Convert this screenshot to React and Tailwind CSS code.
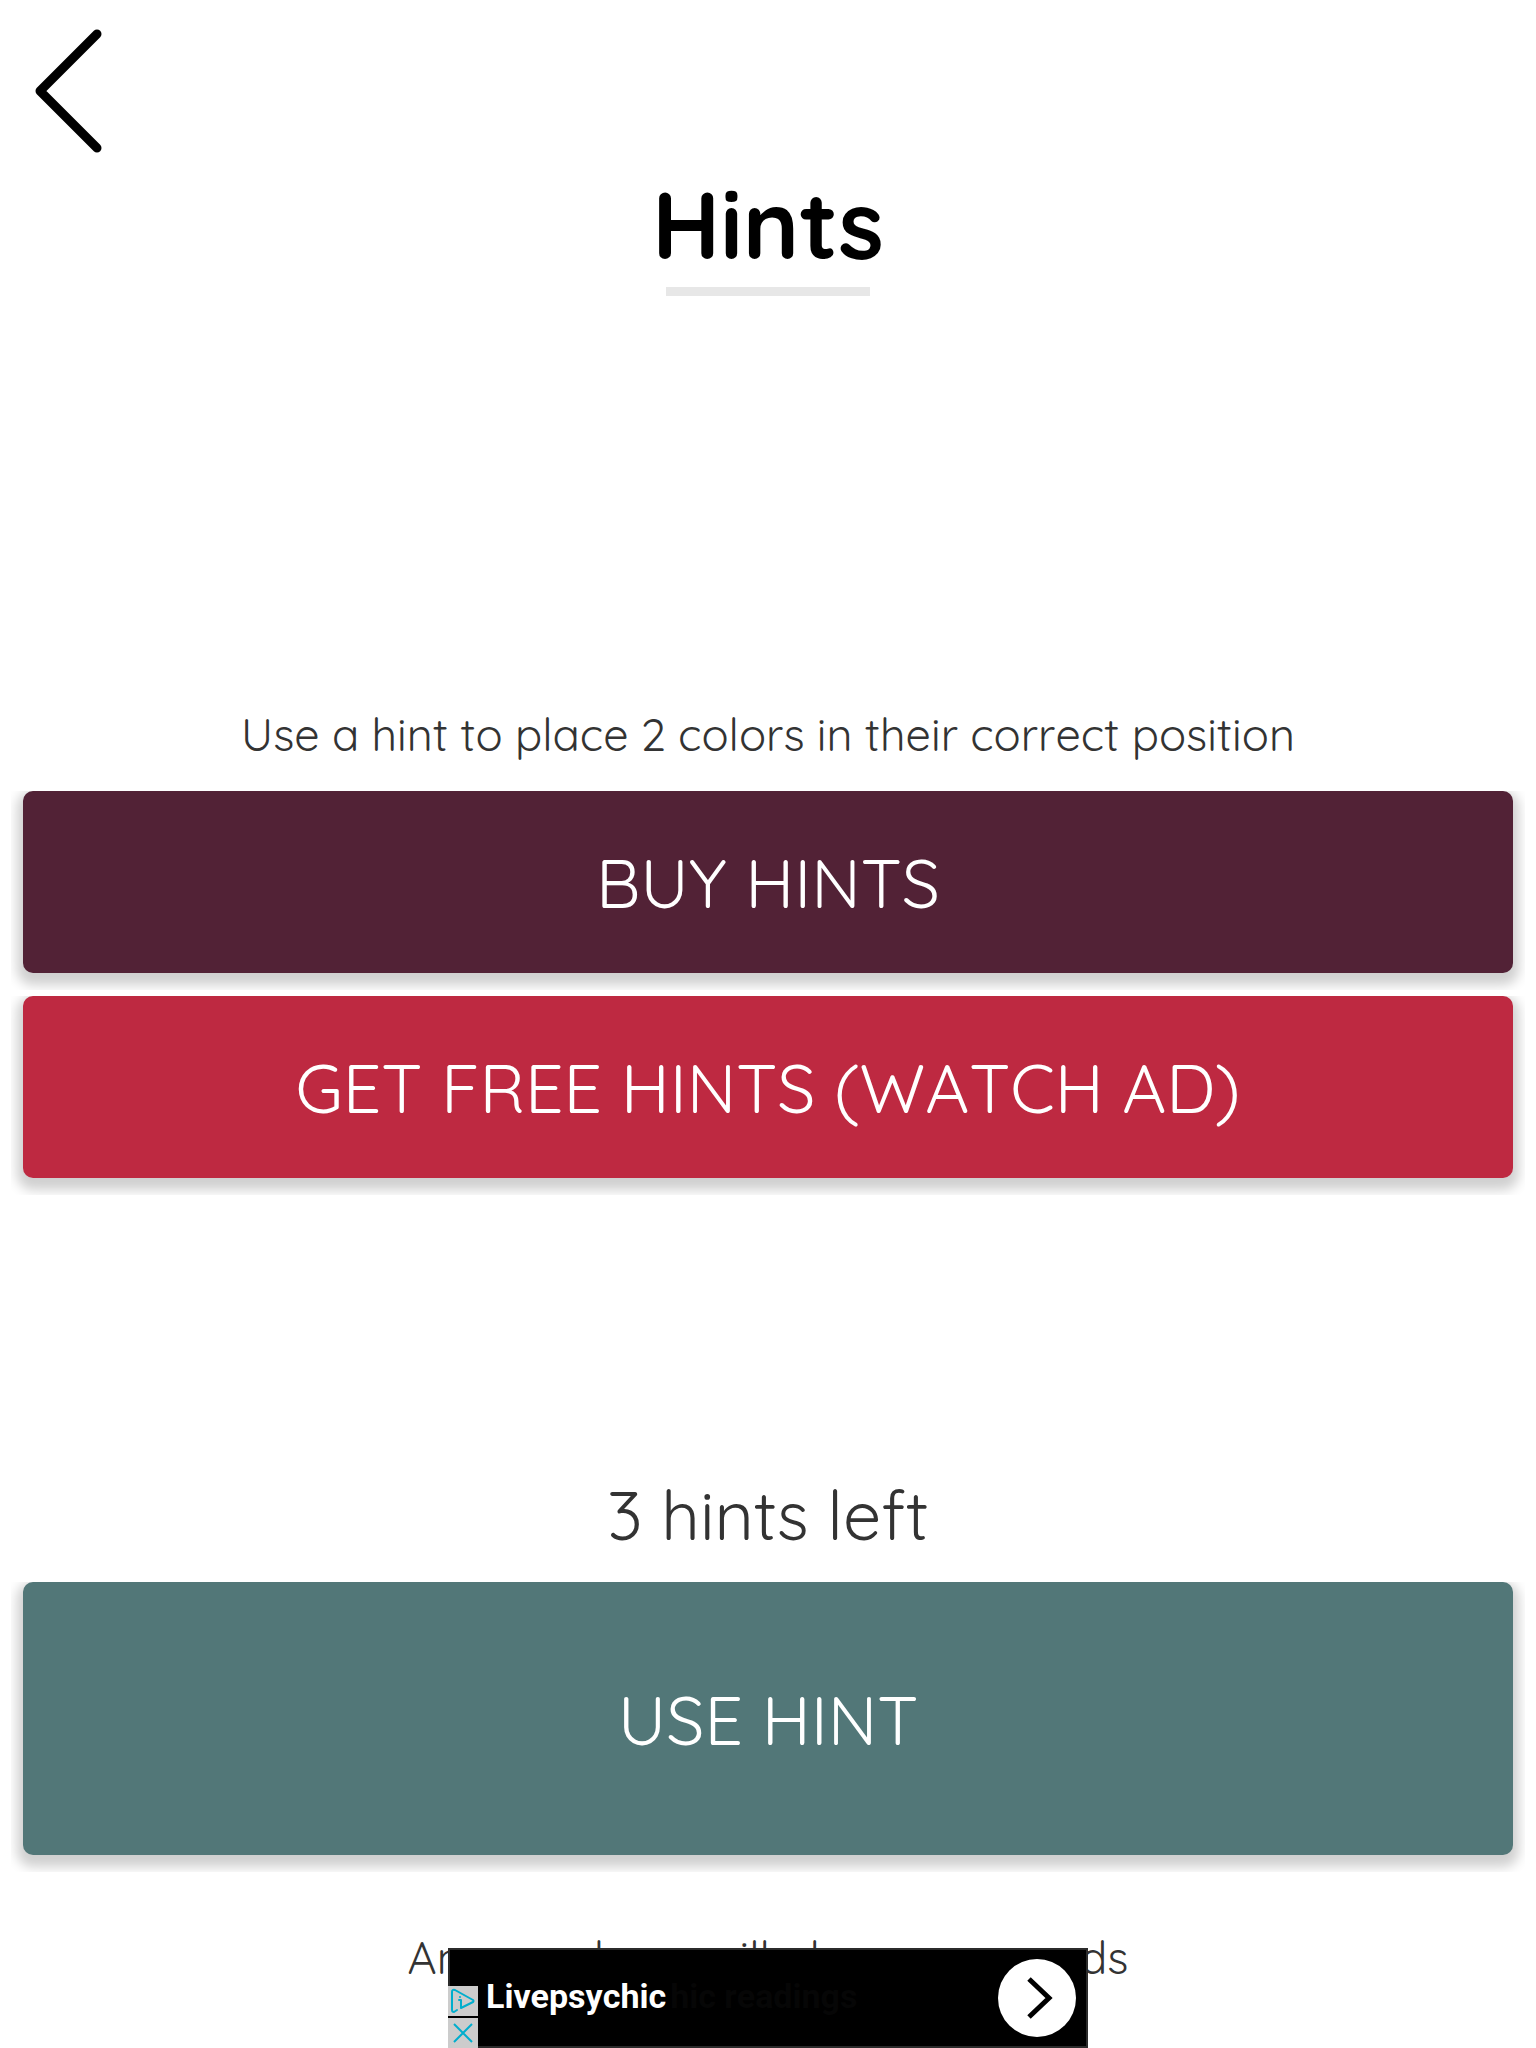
import React from 'react';

const BackIcon = () => (
  <svg className="w-[68px] h-[124px]" viewBox="0 0 68 124" fill="none" stroke="#000" strokeWidth="9" strokeLinecap="round" strokeLinejoin="round">
    <path d="M63 5 L6 62 L63 119" />
  </svg>
);

const ActionButton = ({ children, className }) => (
  <button
    type="button"
    className={`w-full rounded-[10px] pt-[2px] text-[68px] leading-[80px] font-normal text-white shadow-[0_6px_12px_6px_rgba(0,0,0,0.19)] [clip-path:inset(0_-12px_-17px_-12px)] ${className}`}
  >
    {children}
  </button>
);

const AdBanner = () => (
  <aside className="fixed bottom-0 left-1/2 -translate-x-1/2 w-[640px] h-[100px] bg-black border-2 border-[#2b2b2b] font-['Roboto',sans-serif]">
    <a href="#ad" className="flex h-full items-center justify-between pl-9 pr-[10px]">
      <span className="flex gap-1 pb-1 text-[34px] leading-10 font-bold text-white">
        <span>Livepsychic</span>
        {/* fading out headline */}
        <span className="text-[#060606]">hic readings</span>
      </span>
      <span className="flex h-[78px] w-[78px] items-center justify-center rounded-full bg-white">
        <svg className="w-[78px] h-[78px]" viewBox="0 0 78 78" fill="none" stroke="#000" strokeWidth="5">
          <path d="M31 20 L51 39 L31 58" />
        </svg>
      </span>
    </a>
    <div className="absolute -bottom-[2px] -left-[2px] flex flex-col gap-[2px] bg-black">
      <button type="button" aria-label="Ad choices" className="h-[30px] w-[30px] bg-[#cccccc]">
        <svg viewBox="0 0 30 30" fill="none" stroke="#00aecd" strokeWidth="2" strokeLinejoin="round" strokeLinecap="round">
          <path d="M9 24 L6 26 Q4 26 4 24 V6 Q4 3 7 4 L25 14 Q26 15 25 16 L13 22 V14 H11" />
          <circle cx="12" cy="11" r="1" fill="#00aecd" stroke="none" />
        </svg>
      </button>
      <button type="button" aria-label="Close ad" className="h-[30px] w-[30px] bg-[#cccccc]">
        <svg viewBox="0 0 30 30" fill="none" stroke="#00aecd" strokeWidth="2">
          <path d="M6 6 L24 24 M24 6 L6 24" />
        </svg>
      </button>
    </div>
  </aside>
);

const App = () => {
  return (
    <div className="min-h-screen bg-white font-['Quicksand','Lato',sans-serif] text-[#333333] [font-kerning:none]">
      <header className="flex flex-col px-[34px] pt-[29px]">
        <button type="button" aria-label="Back" className="self-start">
          <BackIcon />
        </button>
        <div className="flex flex-col items-center gap-[6px] pt-[14px]">
          <h1 className="text-[95px] leading-[114px] font-bold text-black">Hints</h1>
          <div className="h-[9px] w-[204px] bg-[#e7e7e7]"></div>
        </div>
      </header>

      <main className="px-[23px] text-center">
        {/* Get more hints */}
        <section className="pt-[408px]">
          <p className="text-[45px] leading-[60px] font-normal">Use a hint to place 2 colors in their correct position</p>
          <div className="mt-[27px] flex flex-col gap-[23px]">
            <ActionButton className="h-[182px] bg-[#522236]">BUY HINTS</ActionButton>
            <ActionButton className="h-[182px] bg-[#be2941]">GET FREE HINTS (WATCH AD)</ActionButton>
          </div>
        </section>

        {/* Use a hint */}
        <section className="pt-[297px]">
          <p className="text-[68px] leading-[80px] font-normal">3 hints left</p>
          <div className="mt-[27px]">
            <ActionButton className="h-[273px] bg-[#527778]">USE HINT</ActionButton>
          </div>
        </section>

        <p className="pt-[72px] text-[45px] leading-[60px] font-normal">Any purchase will also remove ads</p>
      </main>

      <AdBanner />
    </div>
  );
};

export default App;
